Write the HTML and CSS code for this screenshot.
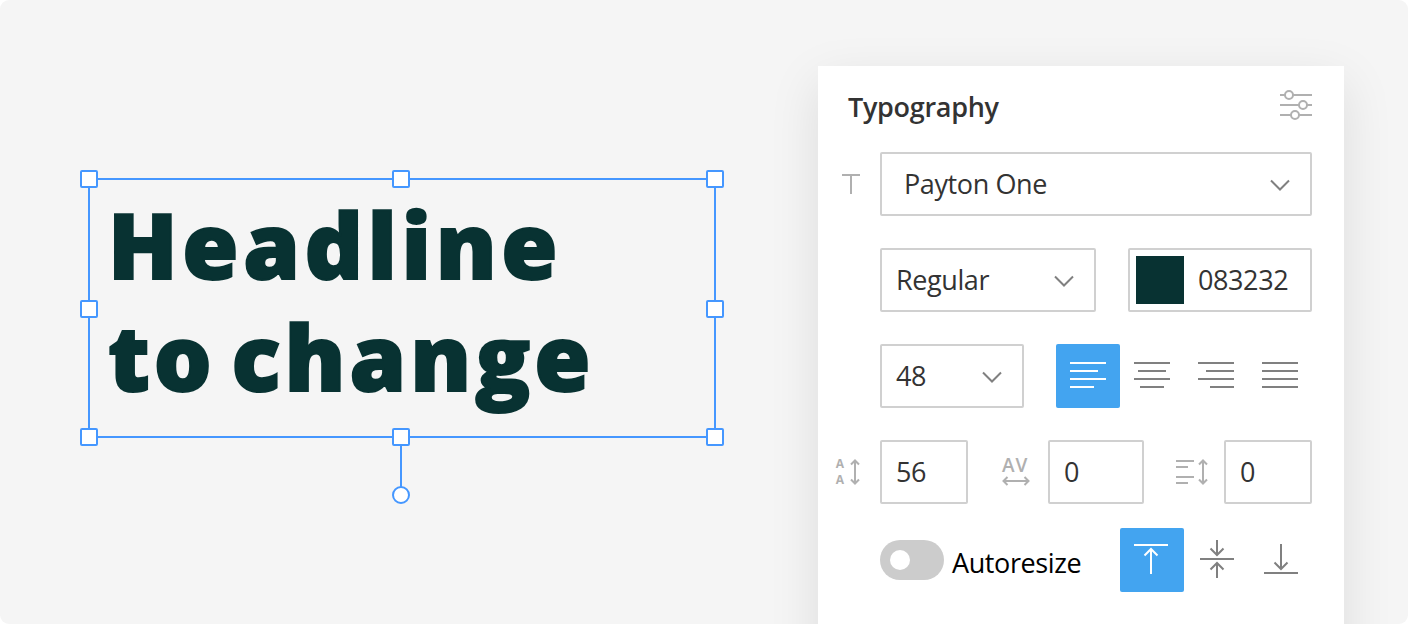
FILE: index.html
```html
<!DOCTYPE html>
<html lang="en">
<head>
<meta charset="utf-8">
<title>Typography</title>
<link rel="stylesheet" href="styles.css">
</head>
<body>
<main class="stage">
  <section class="canvas">
    <div class="selection">
      <div class="headline"><div class="line-one">Headline</div><div class="line-two">to change</div></div>
      <i class="handle top left"></i><i class="handle top center"></i><i class="handle top right"></i>
      <i class="handle middle left"></i><i class="handle middle right"></i>
      <i class="stem"></i>
      <i class="handle bottom left"></i><i class="handle bottom center"></i><i class="handle bottom right"></i>
      <i class="handle rotate center"></i>
    </div>
  </section>
  <aside class="panel">
    <header class="header">
      <h1 class="title">Typography</h1>
      <svg class="icon light" width="32" height="30" viewBox="0 0 32 30"><path d="M0 5h5M13 5h19M0 15h19M27 15h5M0 25h11M19 25h13"/><circle cx="9" cy="5" r="4"/><circle cx="23" cy="15" r="4"/><circle cx="15" cy="25" r="4"/></svg>
    </header>
    <div class="row">
      <div class="lead"><svg class="icon light" width="62" height="64"><path d="M24 23h18M33 23v19"/></svg></div>
      <div class="field family"><span class="t-family">Payton One</span><svg class="icon" width="20" height="12"><path d="M1 2.500l9 9 9-9"/></svg></div>
    </div>
    <div class="row">
      <div class="lead"></div>
      <div class="field weight"><span class="t-weight">Regular</span><svg class="icon" width="20" height="12"><path d="M1 2.500l9 9 9-9"/></svg></div>
      <div class="field color"><i class="swatch"></i><span class="t-color">083232</span></div>
    </div>
    <div class="row">
      <div class="lead"></div>
      <div class="field size"><span class="t-num">48</span><svg class="icon" width="20" height="12"><path d="M1 2.500l9 9 9-9"/></svg></div>
      <div class="group">
        <div class="button active"><svg class="icon" width="64" height="64"><path d="M14 19h36M14 27h28M14 35h36M14 43h24"/></svg></div>
        <div class="button"><svg class="icon" width="64" height="64"><path d="M14 19h36M18 27h28M14 35h36M20 43h24"/></svg></div>
        <div class="button"><svg class="icon" width="64" height="64"><path d="M14 19h36M22 27h28M14 35h36M26 43h24"/></svg></div>
        <div class="button"><svg class="icon" width="64" height="64"><path d="M14 19h36M14 27h36M14 35h36M14 43h36"/></svg></div>
      </div>
    </div>
    <div class="row">
      <div class="lead"><svg class="icon light" width="62" height="64"><text class="small-a" x="17.8" y="28">A</text><text class="small-a" x="17.8" y="44">A</text><path d="M37 21v22M33 24.500l4-4 4 4M33 39.500l4 4 4-4"/></svg></div>
      <div class="field number"><span class="t-num">56</span></div>
      <div class="lead wide"><svg class="icon light" width="80" height="64"><text class="av" x="34" y="32">AV</text><path d="M36 41h24M39.500 37l-4 4 4 4M56.500 37l4 4-4 4"/></svg></div>
      <div class="field number mid"><span class="t-num">0</span></div>
      <div class="lead wide"><svg class="icon light" width="80" height="64"><path d="M32 21h18M32 27h12M32 37h18M32 43h12M59 21v22M55 24.500l4-4 4 4M55 39.500l4 4 4-4"/></svg></div>
      <div class="field number"><span class="t-num">0</span></div>
    </div>
    <div class="row last">
      <div class="lead"></div>
      <div class="toggle"><i class="knob"></i></div>
      <span class="label">Autoresize</span>
      <div class="group">
        <div class="button active"><svg class="icon" width="64" height="64"><path d="M14 17h34M31 21v25M24.500 27.500l6.500-6.500 6.500 6.500"/></svg></div>
        <div class="button"><svg class="icon" width="64" height="64"><path d="M16 31h34M33 12v15M26.500 20.500l6.500 6.500 6.500-6.500M33 35v15M26.500 41.500l6.500-6.500 6.500 6.500"/></svg></div>
        <div class="button"><svg class="icon" width="64" height="64"><path d="M16 45h34M33 16v25M26.500 34.500l6.500 6.500 6.500-6.500"/></svg></div>
      </div>
    </div>
  </aside>
</main>
</body>
</html>
```
FILE: styles.css
```css
* { box-sizing: border-box; }
body { margin: 0; background: #fff; font-family: "Open Sans", "Noto Sans", sans-serif; font-size: 28px; color: #333; }
.stage { display: flex; justify-content: space-between; height: 624px; padding-right: 64px; background: #f5f5f5; border-radius: 9px; overflow: hidden; }
.canvas { padding: 178px 0 0 88px; }
.selection { position: relative; width: 628px; height: 260px; border: 2px solid #4597ff; padding: 8px 0 0 18px; }
.headline { font-size: 91px; line-height: 112px; font-weight: 800; color: #083232; white-space: nowrap; -webkit-text-stroke: 2px #083232; }
.line-one { letter-spacing: 4.6px; }
.line-two { letter-spacing: 4px; word-spacing: -12px; }
.handle { position: absolute; width: 18px; height: 18px; background: #fff; border: 2px solid #4597ff; border-radius: 2px; }
.top { top: -10px; }
.middle { top: 120px; }
.bottom { bottom: -10px; }
.left { left: -10px; }
.center { left: 302px; }
.right { right: -10px; }
.rotate { top: 306px; border-radius: 50%; }
.stem { position: absolute; left: 310px; top: 258px; width: 2px; height: 49px; background: #4597ff; }
.panel { width: 526px; height: 600px; margin-top: 66px; padding-right: 32px; background: #fff; box-shadow: 0 16px 48px rgba(0, 0, 0, .1); }
.header { display: flex; justify-content: space-between; height: 86px; padding: 24px 0 0 30px; }
.title { margin: 0; font-size: 27px; line-height: 33px; font-weight: 600; letter-spacing: -.3px; }
.row { display: flex; height: 64px; margin-bottom: 32px; }
.row.last { margin-top: -8px; }
.lead { width: 62px; flex: none; }
.lead.wide { width: 80px; }
.icon { display: block; flex: none; fill: none; stroke: #808080; stroke-width: 2; overflow: visible; }
.icon.light { stroke: #b0b0b0; }
.icon text { fill: #b0b0b0; stroke: none; }
.small-a { font-size: 12px; font-weight: 700; }
.av { font-size: 19px; font-weight: 600; letter-spacing: 1px; }
.field { display: flex; align-items: center; justify-content: space-between; height: 64px; border: 2px solid #d0d0d0; border-radius: 2px; padding: 0 20px 0 14px; line-height: 60px; white-space: nowrap; }
.family { width: 432px; padding-left: 22px; }
.weight { width: 216px; }
.color { width: 184px; margin-left: 32px; padding: 0 0 0 6px; justify-content: flex-start; gap: 14px; }
.swatch { width: 48px; height: 48px; background: #083232; }
.size { width: 144px; }
.number { width: 88px; }
.number.mid { width: 96px; }
.group { display: flex; margin-left: auto; }
.button { width: 64px; height: 64px; border-radius: 2px; }
.active { background: #43a4f0; }
.active .icon { stroke: #fff; }
.toggle { width: 64px; height: 40px; margin-top: 12px; padding: 10px; border-radius: 20px; background: #ccc; }
.knob { display: block; width: 20px; height: 20px; border-radius: 50%; background: #fff; }
.label { margin-left: 8px; line-height: 69px; color: #000; letter-spacing: -.4px; font-size: 27px; }
.t-family, .t-weight { font-size: 27px; letter-spacing: -.4px; }
.t-color, .t-num { font-size: 27px; letter-spacing: -.4px; }
```
